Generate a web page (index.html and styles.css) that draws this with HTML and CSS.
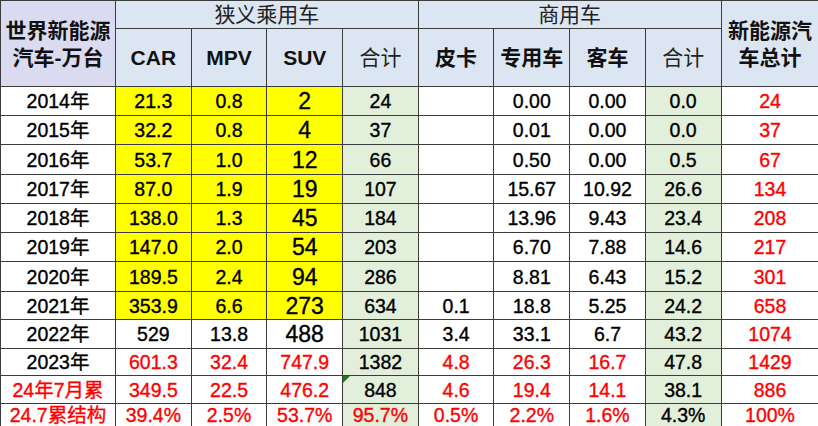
FILE: index.html
```html
<!DOCTYPE html>
<html lang="zh">
<head>
<meta charset="utf-8">
<link rel="stylesheet" href="styles.css">
</head>
<body>
<table class="sheet">
  <colgroup>
    <col class="c-year"><col class="c-n"><col class="c-n"><col class="c-n"><col class="c-n">
    <col class="c-n"><col class="c-n"><col class="c-n"><col class="c-n"><col class="c-total">
  </colgroup>
  <thead>
    <tr class="h1">
      <th rowspan="2" class="corner bold">世界新能源<br>汽车-万台</th>
      <th colspan="4" class="group">狭义乘用车</th>
      <th colspan="4" class="group">商用车</th>
      <th rowspan="2" class="bold two">新能源汽<br>车总计</th>
    </tr>
    <tr class="h2">
      <th class="bold">CAR</th>
      <th class="bold">MPV</th>
      <th class="bold">SUV</th>
      <th class="plain">合计</th>
      <th class="bold">皮卡</th>
      <th class="bold">专用车</th>
      <th class="bold">客车</th>
      <th class="plain">合计</th>
    </tr>
  </thead>
  <tbody>
    <tr class="r29"><td>2014年</td><td class="y">21.3</td><td class="y">0.8</td><td class="y big">2</td><td class="g">24</td><td></td><td>0.00</td><td>0.00</td><td class="g">0.0</td><td class="red">24</td></tr>
    <tr class="r29"><td>2015年</td><td class="y">32.2</td><td class="y">0.8</td><td class="y big">4</td><td class="g">37</td><td></td><td>0.01</td><td>0.00</td><td class="g">0.0</td><td class="red">37</td></tr>
    <tr class="r30"><td>2016年</td><td class="y">53.7</td><td class="y">1.0</td><td class="y big">12</td><td class="g">66</td><td></td><td>0.50</td><td>0.00</td><td class="g">0.5</td><td class="red">67</td></tr>
    <tr class="r29"><td>2017年</td><td class="y">87.0</td><td class="y">1.9</td><td class="y big">19</td><td class="g">107</td><td></td><td>15.67</td><td>10.92</td><td class="g">26.6</td><td class="red">134</td></tr>
    <tr class="r29"><td>2018年</td><td class="y">138.0</td><td class="y">1.3</td><td class="y big">45</td><td class="g">184</td><td></td><td>13.96</td><td>9.43</td><td class="g">23.4</td><td class="red">208</td></tr>
    <tr class="r29"><td>2019年</td><td class="y">147.0</td><td class="y">2.0</td><td class="y big">54</td><td class="g">203</td><td></td><td>6.70</td><td>7.88</td><td class="g">14.6</td><td class="red">217</td></tr>
    <tr class="r30"><td>2020年</td><td class="y">189.5</td><td class="y">2.4</td><td class="y big">94</td><td class="g">286</td><td></td><td>8.81</td><td>6.43</td><td class="g">15.2</td><td class="red">301</td></tr>
    <tr class="r28"><td>2021年</td><td class="y">353.9</td><td class="y">6.6</td><td class="y big">273</td><td class="g">634</td><td>0.1</td><td>18.8</td><td>5.25</td><td class="g">24.2</td><td class="red">658</td></tr>
    <tr class="r29"><td>2022年</td><td>529</td><td>13.8</td><td class="big">488</td><td class="g">1031</td><td>3.4</td><td>33.1</td><td>6.7</td><td class="g">43.2</td><td class="red">1074</td></tr>
    <tr class="r27"><td>2023年</td><td class="red">601.3</td><td class="red">32.4</td><td class="red">747.9</td><td class="g">1382</td><td class="red">4.8</td><td class="red">26.3</td><td class="red">16.7</td><td class="g">47.8</td><td class="red">1429</td></tr>
    <tr class="r28"><td class="red">24年7月累</td><td class="red">349.5</td><td class="red">22.5</td><td class="red">476.2</td><td class="g">848<span class="tri"></span></td><td class="red">4.6</td><td class="red">19.4</td><td class="red">14.1</td><td class="g">38.1</td><td class="red">886</td></tr>
    <tr class="r23"><td class="red">24.7累结构</td><td class="red">39.4%</td><td class="red">2.5%</td><td class="red">53.7%</td><td class="g red">95.7%</td><td class="red">0.5%</td><td class="red">2.2%</td><td class="red">1.6%</td><td class="g">4.3%</td><td class="red">100%</td></tr>
  </tbody>
</table>
</body>
</html>
```

FILE: styles.css
```css
html, body {
  margin: 0;
  padding: 0;
  background: #ffffff;
}

.sheet {
  border-collapse: collapse;
  table-layout: fixed;
  width: 818px;
  font-family: "Liberation Sans", "Noto Sans CJK SC", sans-serif;
  color: #000;
}

.c-year { width: 115px; }
.c-n { width: 75.7px; }
.c-total { width: 98px; }

.sheet th,
.sheet td {
  border: 1px solid #3c3c3c;
  padding: 0;
  text-align: center;
  vertical-align: middle;
  white-space: nowrap;
  overflow: hidden;
}

.sheet th {
  background: #dce6f2;
  font-size: 21px;
  line-height: 27px;
  color: #111;
}

.sheet th.corner {
  background: #dadbf0;
}

.sheet th.bold { font-weight: bold; }
.sheet th.plain, .sheet th.group { font-weight: normal; color: #222; }

.h1 { height: 27px; }
.h2 { height: 58px; }

.sheet td {
  font-size: 19.5px;
  line-height: 22px;
  position: relative;
  -webkit-text-stroke: 0.35px currentColor;
}

.sheet td.big { font-size: 23px; }

.y { background: #ffff00; }
.g { background: #e2efda; }
.red { color: #ff0000; }

.r23 { height: 23px; }
.r27 { height: 27px; }
.r28 { height: 28px; }
.r29 { height: 29px; }
.r30 { height: 30px; }

.tri {
  position: absolute;
  left: 0;
  top: 0;
  width: 0;
  height: 0;
  border-top: 7px solid #1e7b1e;
  border-right: 7px solid transparent;
}
```
